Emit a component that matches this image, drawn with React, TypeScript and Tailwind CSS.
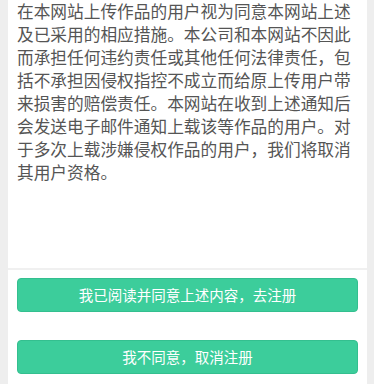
export default function App() {
  return (
    <div
      className="h-[384px] w-full overflow-hidden bg-[#eeeeee] pl-[8px] pr-[7px]"
      style={{ fontFamily: '"Noto Sans CJK SC", "Noto Sans", sans-serif' }}
    >
      <div className="flex h-full flex-col bg-white">
        <div className="h-[268px] px-[9px] text-[16.7px] leading-[23px] text-[#555555]">
          在本网站上传作品的用户视为同意本网站上述及已采用的相应措施。本公司和本网站不因此而承担任何违约责任或其他任何法律责任，包括不承担因侵权指控不成立而给原上传用户带来损害的赔偿责任。本网站在收到上述通知后会发送电子邮件通知上载该等作品的用户。对于多次上载涉嫌侵权作品的用户，我们将取消其用户资格。
        </div>
        <div className="h-[2px] bg-[#f0f0f0]" />
        <div className="flex flex-col gap-[28px] px-[9px] pt-[8px]">
          <button className="flex h-[34px] w-full items-center justify-center rounded-[4px] border border-[#34bf8f] bg-[#3ccd9b] text-[14.5px] text-white">
            我已阅读并同意上述内容，去注册
          </button>
          <button className="flex h-[34px] w-full items-center justify-center rounded-[4px] border border-[#34bf8f] bg-[#3ccd9b] text-[14.5px] text-white">
            我不同意，取消注册
          </button>
        </div>
      </div>
    </div>
  );
}
